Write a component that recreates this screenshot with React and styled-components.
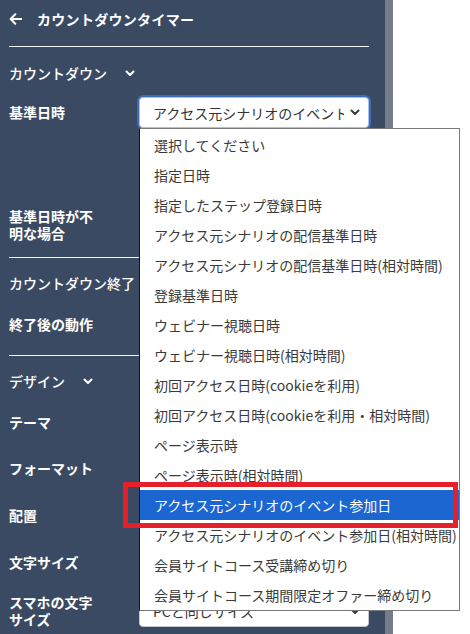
import React from "react";
import styled, { createGlobalStyle, css } from "styled-components";

const GlobalStyle = createGlobalStyle`
  html, body { margin: 0; padding: 0; height: 100%; overflow: hidden; }
  body { font-family: "Noto Sans CJK JP", "Noto Sans", sans-serif; }
  * { box-sizing: border-box; }
`;

const Page = styled.div`
  position: relative;
  display: flex;
  width: 470px;
  height: 634px;
  background: #ffffff;
  font-family: "Noto Sans CJK JP", "Noto Sans", sans-serif;
`;

const Sidebar = styled.aside`
  width: 385px;
  height: 634px;
  flex: none;
  background: #3b4a63;
  color: #ffffff;
  padding: 0 16px 0 9px;
  display: flex;
  flex-direction: column;
`;

const ScrollTrack = styled.div`
  width: 8px;
  flex: none;
  background: #767d8a;
`;

const Canvas = styled.main`
  flex: 1;
  background: #ffffff;
`;

const Header = styled.div`
  height: 38px;
  display: flex;
  align-items: center;
  gap: 15px;
`;

const Title = styled.h1`
  margin: 0;
  font-size: 14px;
  font-weight: 700;
  letter-spacing: 0.3px;
`;

const Divider = styled.hr`
  margin: ${(p) => p.$mt}px 0 0;
  border: 0;
  height: 1px;
  background: #f2f4f7;
  flex: none;
`;

const SectionHeader = styled.div`
  margin-top: ${(p) => p.$mt}px;
  height: 24px;
  display: flex;
  align-items: center;
  gap: 18px;
  font-size: 14px;
  font-weight: 500;
  white-space: nowrap;
`;

const FieldRow = styled.div`
  margin-top: ${(p) => p.$mt}px;
  display: grid;
  grid-template-columns: 130px 230px;
  align-items: center;
  min-height: 31px;
`;

const Label = styled.div`
  font-size: 14px;
  font-weight: 700;
  line-height: 17px;
  max-width: 92px;
`;

const SelectWrap = styled.div`
  position: relative;
`;

const SelectBox = styled.div`
  height: 31px;
  background: #ffffff;
  border: 1px solid #c4c9d1;
  border-radius: 4px;
  display: flex;
  align-items: center;
  padding: 0 8px 0 13px;
  gap: 6px;
  color: #333333;
  font-size: 14px;
  ${(p) =>
    p.$focused &&
    css`
      border-color: #a9c2e8;
      box-shadow: 0 0 0 2px #3b6cb4;
    `}
`;

const SelectText = styled.span`
  flex: 1;
  overflow: hidden;
  white-space: nowrap;
`;

const Popup = styled.ul`
  position: absolute;
  top: 100%;
  left: 0;
  width: 321px;
  margin: 0;
  padding: 1px 0 0;
  list-style: none;
  background: #ffffff;
  border: 1px solid #7a7a7a;
  border-left-color: #151515;
  z-index: 5;
`;

const Option = styled.li`
  height: 30px;
  line-height: 30px;
  padding-left: 14px;
  font-size: 14px;
  white-space: nowrap;
  color: ${(p) => (p.$selected ? "#ffffff" : "#3a3a3a")};
  background: ${(p) => (p.$selected ? "#1b66d1" : "transparent")};
`;

const Annotation = styled.div`
  position: absolute;
  left: 123px;
  top: 482px;
  width: 335px;
  height: 46px;
  border: 5px solid #e5202a;
  z-index: 10;
  pointer-events: none;
`;

const BackArrow = () => (
  <svg width="13" height="12" viewBox="0 0 13 12" fill="none">
    <path d="M12.5 6H1.8M6.3 1.3 1.6 6l4.7 4.7" stroke="#fff" strokeWidth="2" strokeLinecap="round" strokeLinejoin="round" />
  </svg>
);

const Chevron = ({ color = "#fff" }) => (
  <svg width="10" height="7" viewBox="0 0 10 7" fill="none">
    <path d="M1.5 1.5 5 5l3.5-3.5" stroke={color} strokeWidth="2" strokeLinecap="round" strokeLinejoin="round" />
  </svg>
);

const SELECTED = "アクセス元シナリオのイベント参加日";

const OPTIONS = [
  "選択してください",
  "指定日時",
  "指定したステップ登録日時",
  "アクセス元シナリオの配信基準日時",
  "アクセス元シナリオの配信基準日時(相対時間)",
  "登録基準日時",
  "ウェビナー視聴日時",
  "ウェビナー視聴日時(相対時間)",
  "初回アクセス日時(cookieを利用)",
  "初回アクセス日時(cookieを利用・相対時間)",
  "ページ表示時",
  "ページ表示時(相対時間)",
  SELECTED,
  "アクセス元シナリオのイベント参加日(相対時間)",
  "会員サイトコース受講締め切り",
  "会員サイトコース期間限定オファー締め切り",
];

const Select = ({ value, focused, children }) => (
  <SelectWrap>
    <SelectBox $focused={focused}>
      <SelectText>{value}</SelectText>
      <Chevron color="#3a3a3a" />
    </SelectBox>
    {children}
  </SelectWrap>
);

export default function App() {
  return (
    <>
      <GlobalStyle />
      <Page>
        <Sidebar>
          <Header>
            <BackArrow />
            <Title>カウントダウンタイマー</Title>
          </Header>
          <Divider $mt={8} />
          <SectionHeader $mt={14}>
            カウントダウン
            <Chevron />
          </SectionHeader>
          <FieldRow $mt={12}>
            <Label>基準日時</Label>
            <Select value={SELECTED} focused>
              <Popup>
                {OPTIONS.map((o) => (
                  <Option key={o} $selected={o === SELECTED}>
                    {o}
                  </Option>
                ))}
              </Popup>
            </Select>
          </FieldRow>
          <FieldRow $mt={80}>
            <Label>基準日時が不明な場合</Label>
            <Select />
          </FieldRow>
          <Divider $mt={15} />
          <SectionHeader $mt={13}>
            カウントダウン終了
            <Chevron />
          </SectionHeader>
          <FieldRow $mt={14}>
            <Label>終了後の動作</Label>
            <Select />
          </FieldRow>
          <Divider $mt={15} />
          <SectionHeader $mt={13}>
            デザイン
            <Chevron />
          </SectionHeader>
          <FieldRow $mt={14}>
            <Label>テーマ</Label>
            <Select />
          </FieldRow>
          <FieldRow $mt={15}>
            <Label>フォーマット</Label>
            <Select />
          </FieldRow>
          <FieldRow $mt={16}>
            <Label>配置</Label>
            <Select />
          </FieldRow>
          <FieldRow $mt={16}>
            <Label>文字サイズ</Label>
            <Select />
          </FieldRow>
          <FieldRow $mt={16}>
            <Label>スマホの文字サイズ</Label>
            <Select value="PCと同じサイズ" />
          </FieldRow>
        </Sidebar>
        <ScrollTrack />
        <Canvas />
        <Annotation />
      </Page>
    </>
  );
}
